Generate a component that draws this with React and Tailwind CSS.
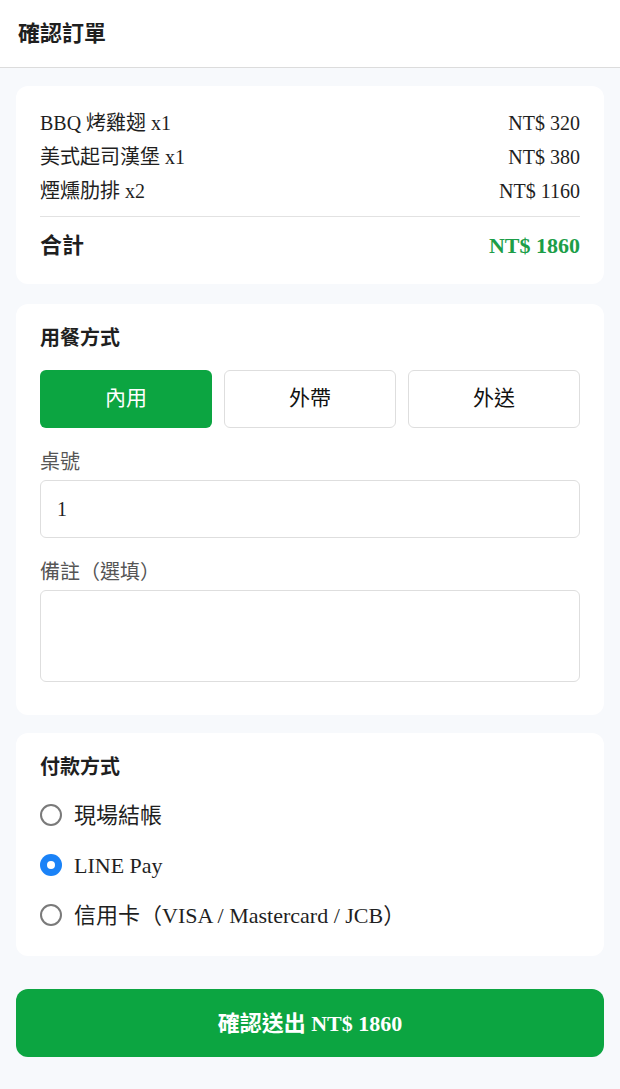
import { useState } from 'react';

const ITEMS = [
  { name: 'BBQ 烤雞翅 x1', price: 'NT$ 320' },
  { name: '美式起司漢堡 x1', price: 'NT$ 380' },
  { name: '煙燻肋排 x2', price: 'NT$ 1160' },
];

const MODES = ['內用', '外帶', '外送'];
const PAYS = ['現場結帳', 'LINE Pay', '信用卡（VISA / Mastercard / JCB）'];

const font = { fontFamily: '"Liberation Serif", "Noto Sans CJK TC", serif' };

export default function App() {
  const [mode, setMode] = useState(0);
  const [pay, setPay] = useState(1);
  return (
    <div className="min-h-[1089px] bg-[#f7f9fc] text-[#1f1f1f] font-['Liberation_Serif','Noto_Sans_CJK_TC',serif]">
      <header className="h-[68px] bg-white border-b border-[#dcdcdc] flex items-center px-[18px]">
        <h1 className="text-[22px] font-bold">確認訂單</h1>
      </header>

      <main className="px-4 pt-[18px]">
        <section className="bg-white rounded-[12px] px-6 pt-[20px] pb-[23px]">
          {ITEMS.map((it) => (
            <div key={it.name} className="flex justify-between h-[34px] items-center text-[20px]">
              <span>{it.name}</span>
              <span>{it.price}</span>
            </div>
          ))}
          <div className="mt-[8px] border-t border-[#e2e2e2]" />
          <div className="flex justify-between items-center pt-[12px] h-[44px] text-[22px] font-bold">
            <span>合計</span>
            <span className="text-[#1c9e48]">NT$ 1860</span>
          </div>
        </section>

        <section className="mt-[20px] bg-white rounded-[12px] px-6 pt-[20px] pb-[33px]">
          <h2 className="text-[20px] font-bold leading-[28px]">用餐方式</h2>
          <div className="mt-[18px] grid grid-cols-3 gap-3">
            {MODES.map((m, i) => (
              <button
                key={m}
                onClick={() => setMode(i)}
                className={
                  mode === i
                    ? 'h-[58px] rounded-[6px] bg-[#0ca541] text-white text-[21px]'
                    : 'h-[58px] rounded-[6px] bg-white border border-[#dedede] text-[#111] text-[21px]'
                }
              >
                {m}
              </button>
            ))}
          </div>
          <label className="block mt-[20px] text-[20px] leading-[28px] text-[#555]">桌號</label>
          <input
            defaultValue="1"
            className="mt-[4px] block w-full h-[58px] rounded-[6px] border border-[#dedede] px-4 text-[20px] outline-none"
            style={font}
          />
          <label className="block mt-[20px] text-[20px] leading-[28px] text-[#555]">備註（選填）</label>
          <textarea
            className="mt-[4px] block w-full h-[92px] rounded-[6px] border border-[#dedede] px-4 py-3 text-[20px] outline-none resize-none"
            style={font}
          />
        </section>

        <section className="mt-[18px] bg-white rounded-[12px] px-6 pt-[20px] pb-[16px]">
          <h2 className="text-[20px] font-bold leading-[28px]">付款方式</h2>
          <div className="mt-[9px]">
            {PAYS.map((p, i) => (
              <div key={p} onClick={() => setPay(i)} className="h-[50px] flex items-center gap-[12px] cursor-pointer text-[22px]">
                {pay === i ? (
                  <span className="w-[22px] h-[22px] rounded-full bg-[#1a82f7] flex items-center justify-center">
                    <span className="w-[8px] h-[8px] rounded-full bg-white" />
                  </span>
                ) : (
                  <span className="w-[22px] h-[22px] rounded-full border-[2px] border-[#7a7a7a]" />
                )}
                <span>{p}</span>
              </div>
            ))}
          </div>
        </section>

        <button className="mt-[33px] w-full h-[68px] rounded-[12px] bg-[#0ca541] text-white text-[22px] font-bold">
          確認送出 NT$ 1860
        </button>
      </main>
    </div>
  );
}
